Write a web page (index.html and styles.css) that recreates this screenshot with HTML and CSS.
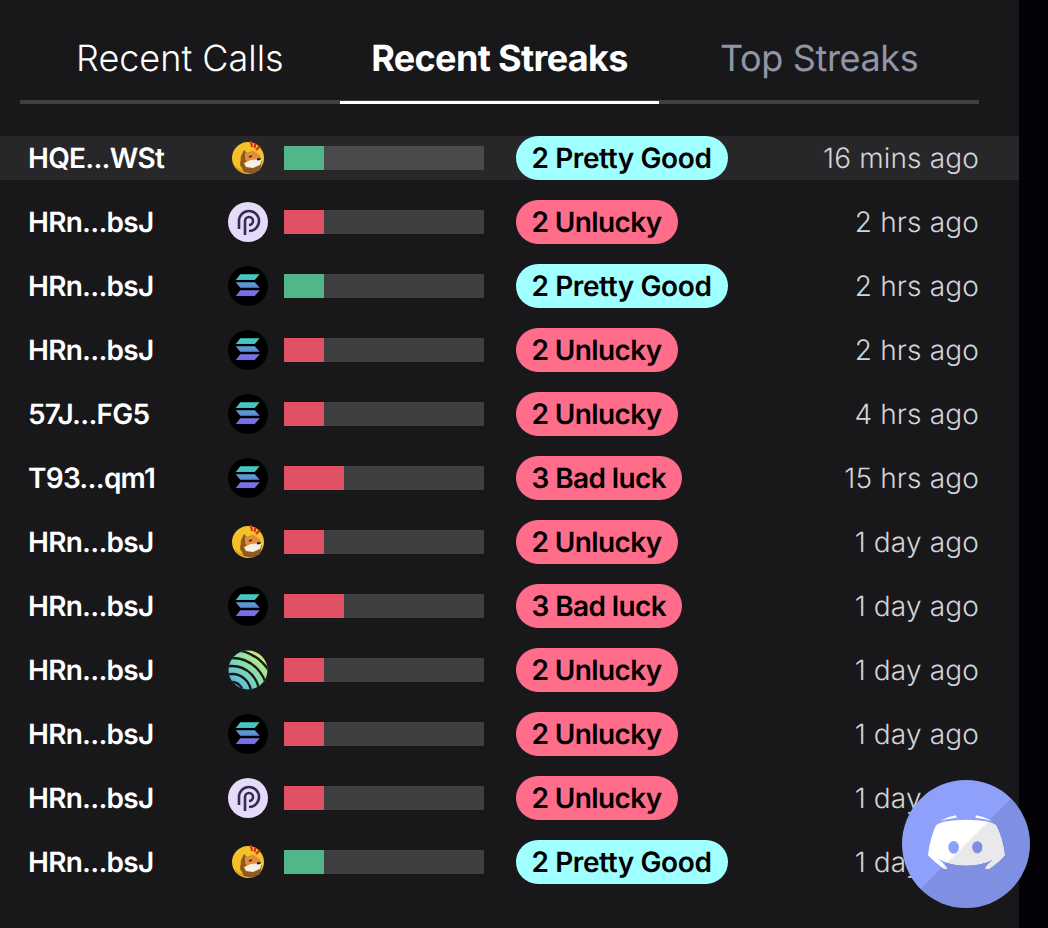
FILE: index.html
```html
<!DOCTYPE html>
<html lang="en">
<head>
<meta charset="utf-8">
<title>Recent Streaks</title>
<link rel="stylesheet" href="styles.css">
</head>
<body>
<svg class="defs" width="0" height="0" aria-hidden="true">
  <defs>
    <linearGradient id="solgrad" x1="0" y1="0" x2="0" y2="1">
      <stop offset="0" stop-color="#43d0c0"/>
      <stop offset="0.5" stop-color="#5a96d8"/>
      <stop offset="1" stop-color="#8a5cf0"/>
    </linearGradient>
    <linearGradient id="seigrad" x1="1" y1="0" x2="0" y2="1">
      <stop offset="0.1" stop-color="#d0ee70"/>
      <stop offset="0.5" stop-color="#84dcae"/>
      <stop offset="0.9" stop-color="#4fb4e4"/>
    </linearGradient>
    <clipPath id="seiclip"><circle cx="20" cy="20" r="19.500"/></clipPath>
    <symbol id="bonk" viewBox="0 0 40 40">
      <circle cx="20" cy="20" r="16" fill="#f5c02a"/>
      <path d="M6 27a16 16 0 0 0 28 0a20 20 0 0 1-28 0z" fill="#dba01c"/>
      <path d="M23 3l1 6M27.500 5l-1 5M32 8l-4 4" stroke="#d12a1a" stroke-width="2" fill="none"/>
      <path d="M12 27l1-9 3-6 3 3 6-2 6 4 3 6-2 9-8 4-8-2z" fill="#8f5a22"/>
      <path d="M17 15l8-2 6 4 3 6-5 3-9-1-3-4z" fill="#e38d3a"/>
      <path d="M16 25l7-3 11-1-2 6-7 3-7-1z" fill="#f6efe2"/>
      <path d="M29 21.500l3.500-.5" stroke="#221a14" stroke-width="2.200"/>
      <path d="M21 19l3-1" stroke="#3a2a18" stroke-width="1.400"/>
    </symbol>
    <symbol id="pyth" viewBox="0 0 40 40">
      <circle cx="20" cy="20" r="20" fill="#e4daf9"/>
      <path d="M11 27V19a10 10 0 0 1 20 0a10 10 0 0 1-10 10" fill="none" stroke="#352c50" stroke-width="2.600"/>
      <path d="M17 33V19a4 4 0 1 1 4 4" fill="none" stroke="#352c50" stroke-width="2.600"/>
    </symbol>
    <symbol id="sol" viewBox="0 0 40 40">
      <circle cx="20" cy="20" r="20" fill="#000"/>
      <path d="M12.300 8.300H31.700L26.700 14H7.700ZM7.700 16.200H26.700L31.700 21.800H12.300ZM12.300 24.300H31.700L26.700 30H7.700Z" fill="url(#solgrad)"/>
    </symbol>
    <symbol id="sei" viewBox="0 0 40 40">
      <g clip-path="url(#seiclip)">
        <rect width="40" height="40" fill="url(#seigrad)"/>
        <g fill="none" stroke="#18181b" stroke-width="2.300">
          <circle cx="4" cy="43" r="11"/>
          <circle cx="4" cy="43" r="19"/>
          <circle cx="4" cy="43" r="27"/>
          <circle cx="4" cy="43" r="35"/>
          <circle cx="4" cy="43" r="43"/>
        </g>
      </g>
    </symbol>
  </defs>
</svg>

<main class="panel">
  <nav class="tabs">
    <div class="tab">Recent Calls</div>
    <div class="tab active">Recent Streaks</div>
    <div class="tab muted">Top Streaks</div>
  </nav>

  <div class="rows">
    <div class="row hl">
      <span class="name">HQE...WSt</span>
      <span class="logo"><svg><use href="#bonk"/></svg></span>
      <span class="bar"><i class="fill good w2"></i></span>
      <span class="cell"><span class="pill cyan">2 Pretty Good</span></span>
      <span class="time">16 mins ago</span>
    </div>
    <div class="row">
      <span class="name">HRn...bsJ</span>
      <span class="logo"><svg><use href="#pyth"/></svg></span>
      <span class="bar"><i class="fill bad w2"></i></span>
      <span class="cell"><span class="pill pink">2 Unlucky</span></span>
      <span class="time">2 hrs ago</span>
    </div>
    <div class="row">
      <span class="name">HRn...bsJ</span>
      <span class="logo"><svg><use href="#sol"/></svg></span>
      <span class="bar"><i class="fill good w2"></i></span>
      <span class="cell"><span class="pill cyan">2 Pretty Good</span></span>
      <span class="time">2 hrs ago</span>
    </div>
    <div class="row">
      <span class="name">HRn...bsJ</span>
      <span class="logo"><svg><use href="#sol"/></svg></span>
      <span class="bar"><i class="fill bad w2"></i></span>
      <span class="cell"><span class="pill pink">2 Unlucky</span></span>
      <span class="time">2 hrs ago</span>
    </div>
    <div class="row">
      <span class="name">57J...FG5</span>
      <span class="logo"><svg><use href="#sol"/></svg></span>
      <span class="bar"><i class="fill bad w2"></i></span>
      <span class="cell"><span class="pill pink">2 Unlucky</span></span>
      <span class="time">4 hrs ago</span>
    </div>
    <div class="row">
      <span class="name">T93...qm1</span>
      <span class="logo"><svg><use href="#sol"/></svg></span>
      <span class="bar"><i class="fill bad w3"></i></span>
      <span class="cell"><span class="pill pink">3 Bad luck</span></span>
      <span class="time">15 hrs ago</span>
    </div>
    <div class="row">
      <span class="name">HRn...bsJ</span>
      <span class="logo"><svg><use href="#bonk"/></svg></span>
      <span class="bar"><i class="fill bad w2"></i></span>
      <span class="cell"><span class="pill pink">2 Unlucky</span></span>
      <span class="time">1 day ago</span>
    </div>
    <div class="row">
      <span class="name">HRn...bsJ</span>
      <span class="logo"><svg><use href="#sol"/></svg></span>
      <span class="bar"><i class="fill bad w3"></i></span>
      <span class="cell"><span class="pill pink">3 Bad luck</span></span>
      <span class="time">1 day ago</span>
    </div>
    <div class="row">
      <span class="name">HRn...bsJ</span>
      <span class="logo"><svg><use href="#sei"/></svg></span>
      <span class="bar"><i class="fill bad w2"></i></span>
      <span class="cell"><span class="pill pink">2 Unlucky</span></span>
      <span class="time">1 day ago</span>
    </div>
    <div class="row">
      <span class="name">HRn...bsJ</span>
      <span class="logo"><svg><use href="#sol"/></svg></span>
      <span class="bar"><i class="fill bad w2"></i></span>
      <span class="cell"><span class="pill pink">2 Unlucky</span></span>
      <span class="time">1 day ago</span>
    </div>
    <div class="row">
      <span class="name">HRn...bsJ</span>
      <span class="logo"><svg><use href="#pyth"/></svg></span>
      <span class="bar"><i class="fill bad w2"></i></span>
      <span class="cell"><span class="pill pink">2 Unlucky</span></span>
      <span class="time">1 day ago</span>
    </div>
    <div class="row">
      <span class="name">HRn...bsJ</span>
      <span class="logo"><svg><use href="#bonk"/></svg></span>
      <span class="bar"><i class="fill good w2"></i></span>
      <span class="cell"><span class="pill cyan">2 Pretty Good</span></span>
      <span class="time">1 day ago</span>
    </div>
  </div>
</main>

<a class="discord" aria-label="Discord">
  <svg viewBox="0 0 128 128" width="128" height="128">
    <defs>
      <clipPath id="half"><path d="M128 0V128H0Z"/></clipPath>
      <g id="dlogo" transform="translate(18 28) scale(.3333)">
        <path d="M60 39Q84 25 108 22L110 29Q85 31 60 39ZM216 39Q192 25 168 22L166 29Q191 31 216 39Z"/>
        <path fill-rule="evenodd" d="M48 52Q60 43 72 41Q138 30 205 41Q218 44 228 52Q248 90 254 142Q235 165 206 183H196Q198 172 222 153Q185 172 138 172Q91 172 55 153Q78 172 82 183H72Q45 165 24 142Q30 90 48 52ZM85 118a16 19 0 1 0 32 0a16 19 0 1 0-32 0ZM156 118a16 19 0 1 0 32 0a16 19 0 1 0-32 0Z"/>
      </g>
    </defs>
    <use href="#dlogo" fill="#fff"/>
    <g clip-path="url(#half)"><use href="#dlogo" fill="#e9e9ec"/></g>
  </svg>
</a>
</body>
</html>
```
FILE: styles.css
```css
* { box-sizing: border-box; }
html, body { margin: 0; height: 100%; }
body {
  width: 1048px;
  height: 928px;
  background: #030307;
  font-family: Inter, "Liberation Sans", sans-serif;
  text-rendering: geometricPrecision;
  overflow: hidden;
  position: relative;
}
.defs { position: absolute; }
.panel {
  width: 1019px;
  height: 928px;
  background: #18181b;
  padding-top: 24px;
}
.tabs {
  display: flex;
  margin: 0 40px 0 20px;
  box-shadow: inset 0 -4px 0 #3f3f42;
  height: 80px;
}
.tab {
  flex: 1;
  display: flex;
  align-items: center;
  justify-content: center;
  height: 80px;
  padding-bottom: 12px;
  font-size: 36px;
  font-weight: 300;
  color: #fff;
}
.tab.active {
  font-weight: 700;
  letter-spacing: -0.65px;
  box-shadow: inset 0 -3px 0 #fff;
}
.tab.muted {
  font-weight: 400;
  letter-spacing: -0.36px;
  color: #9096a6;
}
.rows {
  display: flex;
  flex-direction: column;
  gap: 20px;
  margin-top: 32px;
}
.row {
  display: flex;
  align-items: center;
  height: 44px;
  padding: 0 40px 0 28px;
}
.row.hl { background: #27272a; }
.name {
  width: 200px;
  font-size: 28px;
  font-weight: 600;
  letter-spacing: -0.75px;
  color: #fff;
  white-space: nowrap;
}
.logo {
  width: 40px;
  height: 40px;
  display: block;
  margin-right: 16px;
}
.logo svg { width: 40px; height: 40px; display: block; }
.bar {
  width: 200px;
  height: 24px;
  background: #3f3f42;
  display: block;
  margin-right: 32px;
}
.row.hl .bar { background: #4a4a4d; }
.fill { display: block; height: 100%; }
.fill.w2 { width: 40px; }
.fill.w3 { width: 60px; }
.fill.good { background: #52b788; }
.fill.bad { background: #e05166; }
.cell { flex: 1; }
.pill {
  display: inline-flex;
  align-items: center;
  height: 44px;
  padding: 0 16px 0 15.5px;
  border-radius: 22px;
  font-size: 28px;
  font-weight: 600;
  letter-spacing: -0.4px;
  color: #000;
  white-space: nowrap;
}
.pill.cyan { background: #a0ffff; }
.pill.pink { background: #ff6d8a; letter-spacing: -0.6px; }
.time {
  font-size: 28px;
  font-weight: 300;
  letter-spacing: 0.15px;
  color: #d4d4d8;
  white-space: nowrap;
}
.discord {
  position: absolute;
  left: 902px;
  top: 780px;
  width: 128px;
  height: 128px;
  border-radius: 50%;
  background: linear-gradient(135deg, #8fa0fb 50%, #7f8fe2 50%);
  display: block;
}
.discord svg { display: block; }
```
